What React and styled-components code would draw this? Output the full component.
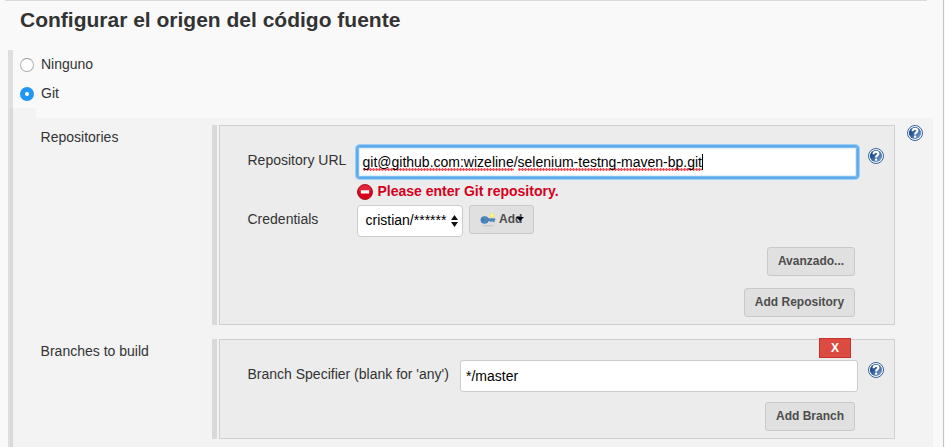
import React from "react";
import styled, { createGlobalStyle, css } from "styled-components";

const Global = createGlobalStyle`
  * { box-sizing: border-box; }
  body { margin: 0; background: #f9f9f9; overflow: hidden; }
`;

const Page = styled.div`
  width: 944px;
  height: 447px;
  overflow: hidden;
  background: #f9f9f9;
  border-right: 1px solid #c4c4c4;
  font: 14px/20px "Liberation Sans", Arial, sans-serif;
  color: #333;
`;

const Header = styled.header`
  width: 922px;
  height: 50px;
  margin-left: 5px;
  padding: 7px 0 0 15px;
  border-top: 1px solid #d9d9d9;
`;

const Title = styled.h1`
  margin: 0;
  font-size: 21px;
  line-height: 24px;
  font-weight: bold;
  white-space: nowrap;
`;

const Source = styled.section`
  height: 397px;
  margin-left: 8px;
  border-left: 5px solid #dfdfdf;
`;

const Options = styled.div`
  display: flex;
  flex-direction: column;
  gap: 9px;
  height: 58px;
  padding: 4px 0 0 7px;
`;

const Option = styled.label`
  display: flex;
  align-items: center;
  gap: 7px;
  height: 20px;
`;

const Radio = styled.span`
  display: block;
  width: 14px;
  height: 14px;
  margin-top: 1px;
  border-radius: 50%;
  background: #fff;
  border: 1px solid #b0b0b0;
  border-top-color: #999;
  ${(p) => p.$checked && css`border: 5px solid #2196f3;`}
`;

const Tab = styled.div`
  width: 26px;
  height: 10px;
  margin-left: -3px;
  background: rgba(0, 0, 0, 0.025);
`;

const Settings = styled.div`
  display: flex;
  flex-direction: column;
  gap: 14px;
  width: 923px;
  height: 329px;
  margin-left: -3px;
  padding: 7px 0 0 30px;
  background: rgba(0, 0, 0, 0.025);
`;

const Setting = styled.div`
  display: flex;
  align-items: flex-start;
  height: ${(p) => p.$height}px;
`;

const Name = styled.div`
  width: 172px;
  padding: 2px 0 0 0.6px;
`;

const Handle = styled.div`
  width: 5px;
  height: 100%;
  margin-right: 2px;
  background: #d9d9d9;
`;

const Panel = styled.div`
  width: 676px;
  height: 100%;
  padding: ${(p) => p.$top}px 10px 0 27.5px;
  border: 1px solid #d0d0d0;
  background: #ececec;
`;

const Line = styled.div`
  display: flex;
  align-items: flex-start;
`;

const Label = styled.label`
  width: ${(p) => p.$width}px;
  padding-top: ${(p) => p.$top}px;
  white-space: nowrap;
`;

const Field = styled.div`
  display: flex;
  align-items: center;
  width: ${(p) => p.$width}px;
  height: 32px;
  padding: 0 0 0 5px;
  border: 1px solid #ccc;
  border-radius: 3px;
  background: #fff;
  color: #000;
  white-space: nowrap;
  ${(p) => p.$focused && css`
    padding-left: 4.5px;
    border-color: #5ba9ea;
    box-shadow: 0 0 0 1px #63aeec, 0 0 0 2px #9bcdf5, inset 0 0 0 1px #7fbdf0, inset 0 0 1px 2px #dceefc;
  `}
`;

const Misspelt = styled.span`
  height: 20px;
  padding-top: 1px;
  line-height: 18px;
  background: radial-gradient(circle, #f2505a 1px, transparent 1.6px) 0 16px / 3px 3px repeat-x;
`;

const Caret = styled.span`
  width: 1px;
  height: 16px;
  background: #000;
`;

const HelpSlot = styled.span`
  display: block;
  width: 16px;
  height: 16px;
  margin: ${(p) => p.$top}px 0 0 ${(p) => p.$left}px;
  svg { display: block; }
`;

const ErrorLine = styled.div`
  display: flex;
  align-items: center;
  gap: 4.5px;
  height: 18px;
  margin: 4px 0 5px 109.5px;
  color: #d6001c;
  font-weight: bold;
  svg { margin-top: 1px; }
`;

const Select = styled.div`
  display: flex;
  align-items: center;
  justify-content: space-between;
  width: 106px;
  height: 32px;
  padding: 0 4px 2px 7.5px;
  border: 1px solid #ccc;
  border-radius: 4px;
  background: #fff;
  color: #000;
  svg { margin-top: 2px; }
`;

const Button = styled.button`
  display: flex;
  align-items: center;
  justify-content: center;
  width: ${(p) => p.$width}px;
  height: 29px;
  padding: 0 0 2px;
  border: 1px solid #c9c9c9;
  border-radius: 3px;
  background: #e0e0e0;
  color: #4d4d4d;
  font: bold 12px/16px "Liberation Sans", Arial, sans-serif;
  white-space: nowrap;
`;

const AddButton = styled(Button)`
  justify-content: flex-start;
  gap: 3px;
  margin-left: 6px;
  padding-left: 10px;
`;

const DropArrow = styled.svg`
  margin: 0 0 0 -9px;
`;

const Actions = styled.div`
  display: flex;
  justify-content: flex-end;
  margin: ${(p) => p.$top}px 29px 0 0;
`;

const DeleteRow = styled.div`
  display: flex;
  justify-content: flex-end;
  height: 22px;
  margin: -2px 33px 0 0;
`;

const DeleteButton = styled(Button)`
  width: 32px;
  height: 20px;
  padding: 0;
  border-color: #c9302c;
  border-radius: 0;
  background: #db4b41;
  color: #fff;
`;

const Help = ({ top, left }) => (
  <HelpSlot $top={top} $left={left}>
    <svg width="16" height="16" viewBox="0 0 16 16">
      <defs>
        <linearGradient id="help" x1="0" y1="0" x2="1" y2="1">
          <stop offset="0.3" stopColor="#1e4c8c" />
          <stop offset="1" stopColor="#86acd5" />
        </linearGradient>
      </defs>
      <circle cx="8" cy="8" r="7.5" fill="#fff" stroke="#34619c" />
      <circle cx="8" cy="8" r="6.1" fill="url(#help)" />
      <path d="M5.5 6.3C5.6 4.5 6.6 3.9 8.1 3.9C9.6 3.9 10.4 4.7 10.4 5.8C10.4 7.5 8.1 7.4 8.1 9.5" fill="none" stroke="#fff" strokeWidth="2.1" />
      <rect x="7" y="10.6" width="2.2" height="2.1" rx="0.4" fill="#fff" />
    </svg>
  </HelpSlot>
);

const ErrorIcon = () => (
  <svg width="16" height="16" viewBox="0 0 16 16">
    <circle cx="8" cy="8" r="7.5" fill="#d8041a" stroke="#a71b25" />
    <path d="M2 7a6 6 0 0 1 12 0z" fill="#ee4150" opacity="0.55" />
    <rect x="3.8" y="6.3" width="8.4" height="3.2" rx="0.5" fill="#fff" />
  </svg>
);

const KeyIcon = () => (
  <svg width="16" height="16" viewBox="0 0 16 16">
    <ellipse cx="8" cy="14.8" rx="6" ry="0.8" fill="#bcbcbc" opacity="0.7" />
    <path d="M7 7.4H14.6L15.4 8.4L14.4 9.5V11H13V10H11.6V10.8H10.4V10H7Z" fill="#4d8bc3" stroke="#32699f" strokeWidth="0.3" />
    <ellipse cx="4.6" cy="8.9" rx="3.8" ry="3.5" fill="#4b88c0" stroke="#36699d" strokeWidth="0.5" />
    <circle cx="3" cy="8.8" r="0.7" fill="#235384" />
    <circle cx="12" cy="4.6" r="2.5" fill="#fae968" opacity="0.85" />
    <circle cx="12" cy="4.6" r="1" fill="#fffbb0" />
  </svg>
);

export default function App() {
  return (
    <Page>
      <Global />
      <Header><Title>Configurar el origen del código fuente</Title></Header>
      <Source>
        <Options>
          <Option><Radio />Ninguno</Option>
          <Option><Radio $checked />Git</Option>
        </Options>
        <Tab />
        <Settings>
          <Setting $height={200}>
            <Name>Repositories</Name>
            <Handle />
            <Panel $top={20}>
              <Line>
                <Label $width={109.5} $top={4}>Repository URL</Label>
                <Field $width={501} $focused>
                  <Misspelt>git@github.com:wizeline</Misspelt>/
                  <Misspelt>selenium-testng-maven-bp.git</Misspelt>
                  <Caret />
                </Field>
                <Help top={2} left={10} />
              </Line>
              <ErrorLine><ErrorIcon />Please enter Git repository.</ErrorLine>
              <Line>
                <Label $width={109.5} $top={4}>Credentials</Label>
                <Select>
                  cristian/******
                  <svg width="7" height="12" viewBox="0 0 7 12">
                    <path d="M0 5L3.5 0L7 5ZM0 7L3.5 12L7 7Z" fill="#111" />
                  </svg>
                </Select>
                <AddButton $width={65}>
                  <KeyIcon />Add
                  <DropArrow width="8" height="4" viewBox="0 0 8 4"><path d="M0 0H8L4 4Z" fill="#000" /></DropArrow>
                </AddButton>
              </Line>
              <Actions $top={10}><Button $width={88}>Avanzado...</Button></Actions>
              <Actions $top={12}><Button $width={111}>Add Repository</Button></Actions>
            </Panel>
            <Help top={0} left={12} />
          </Setting>
          <Setting $height={100}>
            <Name>Branches to build</Name>
            <Handle />
            <Panel $top={0}>
              <DeleteRow><DeleteButton>X</DeleteButton></DeleteRow>
              <Line>
                <Label $width={212.5} $top={4}>Branch Specifier (blank for 'any')</Label>
                <Field $width={398}>*/master</Field>
                <Help top={2} left={10} />
              </Line>
              <Actions $top={10}><Button $width={90}>Add Branch</Button></Actions>
            </Panel>
          </Setting>
        </Settings>
      </Source>
    </Page>
  );
}
